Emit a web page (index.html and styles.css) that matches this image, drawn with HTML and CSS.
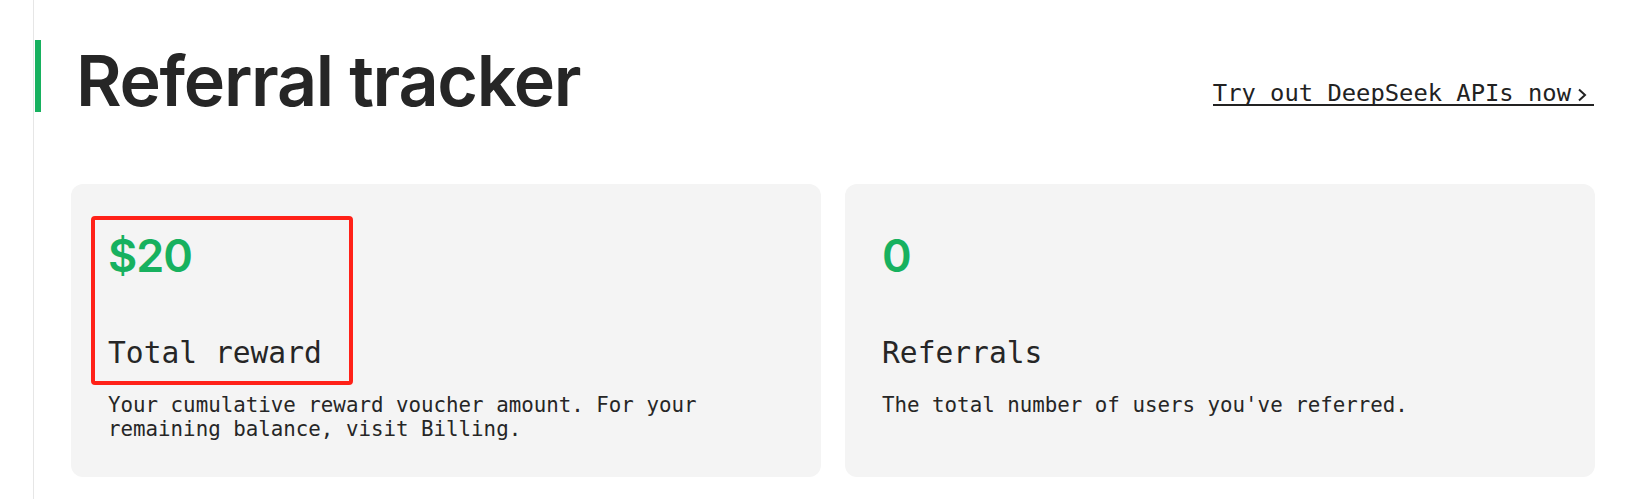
FILE: index.html
```html
<!DOCTYPE html>
<html lang="en">
<head>
<meta charset="utf-8">
<title>Referral tracker</title>
<link rel="stylesheet" href="styles.css">
</head>
<body>
<div class="layout">
  <aside class="sidebar"></aside>
  <main class="main">
    <header class="header">
      <h1 class="title">Referral tracker</h1>
      <a class="cta" href="#">Try out DeepSeek APIs now<svg class="chev" width="23" height="21" viewBox="0 0 23 21" aria-hidden="true"><path d="M8 6.5 L14 12 L8 17.5" fill="none" stroke="#222" stroke-width="2"/></svg></a>
    </header>
    <section class="cards">
      <div class="card">
        <div class="stat-box annot">
          <div class="stat-value">$20</div>
          <div class="stat-label">Total reward</div>
        </div>
        <p class="stat-desc">Your cumulative reward voucher amount. For your remaining balance, visit Billing.</p>
      </div>
      <div class="card">
        <div class="stat-box">
          <div class="stat-value">0</div>
          <div class="stat-label">Referrals</div>
        </div>
        <p class="stat-desc">The total number of users you've referred.</p>
      </div>
    </section>
  </main>
</div>
</body>
</html>
```
FILE: styles.css
```css
* { box-sizing: border-box; }
html, body {
  margin: 0;
  padding: 0;
  background: #ffffff;
}
body {
  font-family: "Inter", "Noto Sans", sans-serif;
  color: #262626;
}
.layout {
  display: flex;
  min-height: 499px;
}
.sidebar {
  width: 34px;
  flex: none;
  border-right: 1px solid #e6e6e6;
}
.main {
  flex: 1;
  display: flex;
  flex-direction: column;
}
.header {
  display: flex;
  justify-content: space-between;
  align-items: flex-start;
  margin: 40px 32px 0 1px;
  height: 72px;
  border-left: 6px solid #17b15f;
  padding-left: 35px;
}
.title {
  margin: 0;
  padding-top: 6px;
  font-family: "Inter", sans-serif;
  font-size: 70px;
  font-weight: 600;
  line-height: 70px;
  letter-spacing: -1.3px;
  color: #262626;
}
.cta {
  display: inline-flex;
  align-items: flex-end;
  margin-top: 43px;
  font-family: "DejaVu Sans Mono", monospace;
  font-size: 23.8px;
  line-height: 21px;
  color: #222222;
  text-decoration: none;
  border-bottom: 2px solid #222222;
}
.chev {
  display: block;
  flex: none;
}
.cards {
  display: grid;
  grid-template-columns: 1fr 1fr;
  gap: 24px;
  margin: 72px 31px 0 37px;
}
.card {
  background: #f4f4f4;
  border-radius: 12px;
  height: 293px;
  padding: 32px 37px 0 37px;
}
.stat-box {
  display: inline-flex;
  flex-direction: column;
  align-items: flex-start;
  border: 4px solid transparent;
  border-radius: 4px;
  margin-left: -17px;
  padding: 9px 27px 10px 13px;
}
.stat-box.annot {
  border-color: #ff2118;
}
.stat-value {
  font-family: "Inter", sans-serif;
  font-size: 45px;
  font-weight: 600;
  line-height: 54px;
  color: #17b15f;
  letter-spacing: -1px;
}
.stat-label {
  margin-top: 52px;
  font-family: "DejaVu Sans Mono", monospace;
  font-size: 29.6px;
  line-height: 36px;
  color: #262626;
}
.stat-desc {
  margin: 8px 0 0 0;
  font-family: "DejaVu Sans Mono", monospace;
  font-size: 20.8px;
  line-height: 24px;
  color: #262626;
}
```
